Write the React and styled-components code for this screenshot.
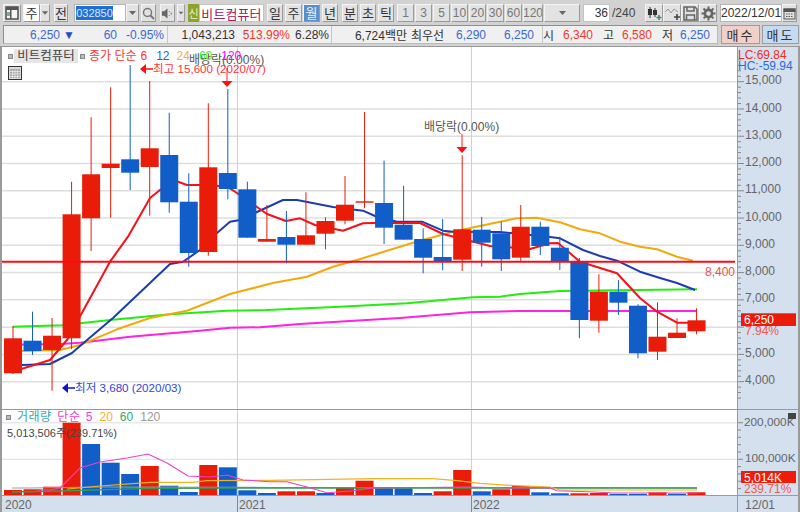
import React from "react";
import styled, { createGlobalStyle } from "styled-components";

const SANS = `"Liberation Sans", "Noto Sans CJK KR", sans-serif`;
const RED = "#e81c08";
const BLUE = "#115ec8";
const TEXT_BLUE = "#3a68d2";
const TEXT_RED = "#f0392b";
const AXIS_BG = "#d4e0ee";

const Global = createGlobalStyle`
  html, body { margin: 0; padding: 0; background: #fff; overflow: hidden; }
  * { box-sizing: border-box; }
`;

const Page = styled.div`
  width: 800px;
  height: 512px;
  display: flex;
  flex-direction: column;
  background: #d2d2d2;
  font-family: ${SANS};
  font-size: 12px;
  color: #333;
  overflow: hidden;
`;

const Toolbar = styled.div`
  height: 25px;
  padding: 4px 3px 3px;
  display: flex;
  align-items: stretch;
`;

const ToolButton = styled.div`
  flex: none;
  width: ${(p) => p.$w}px;
  margin-right: ${(p) => p.$mr ?? 1}px;
  display: flex;
  align-items: center;
  justify-content: center;
  background: ${(p) => (p.$active ? "#5b8fcb" : p.$white ? "#fff" : "#e2e2e2")};
  color: ${(p) => (p.$active ? "#e8f0fa" : p.$dim ? "#777" : "#333")};
  border: 1px solid;
  border-color: #f4f4f4 #9a9a9a #9a9a9a #f4f4f4;
  font-size: ${(p) => p.$fs ?? 13}px;
  line-height: 1;
  white-space: nowrap;
  overflow: hidden;
`;

const CodeField = styled.div`
  flex: none;
  width: 52px;
  background: #fff;
  border: 1px solid #b5b5b5;
  padding: 1px 0 1px 1px;
  display: flex;
  align-items: stretch;
`;

const CodeSelected = styled.span`
  background: #1f6fd8;
  color: #dfeaff;
  width: 37px;
  text-align: center;
  font-size: 11px;
  line-height: 14px;
`;

const NameField = styled.div`
  flex: none;
  width: 65px;
  margin-right: 3px;
  background: #fff;
  color: #a3205f;
  border: 1px solid #c4c4c4;
  display: flex;
  align-items: center;
  justify-content: center;
  font-size: 13px;
  letter-spacing: 0.1px;
  white-space: nowrap;
`;

const GreenBadge = styled.div`
  flex: none;
  width: 11px;
  background: #8ea32c;
  color: #e9efc3;
  font-size: 11px;
  display: flex;
  align-items: center;
  justify-content: center;
`;

const NumberField = styled.div`
  flex: none;
  width: 27px;
  background: #fff;
  border: 1px solid #c4c4c4;
  text-align: right;
  padding-right: 1px;
  font-size: 12px;
  line-height: 16px;
`;

const Slash = styled.span`
  flex: none;
  width: 35px;
  padding-left: 2px;
  line-height: 18px;
  font-size: 12px;
  color: #444;
`;

const DateField = styled.div`
  flex: none;
  width: 62px;
  background: #fff;
  border: 1px solid #b5b5b5;
  font-size: 12px;
  line-height: 16px;
  text-align: center;
  white-space: nowrap;
`;

const InfoRow = styled.div`
  height: 19px;
  padding: 0 2px 0 3px;
  display: flex;
  align-items: stretch;
`;

const InfoPanel = styled.div`
  flex: none;
  width: 715px;
  margin-right: 3px;
  display: flex;
  background: #f0f0f0;
  border: 1px solid #8e8e8e;
  border-right-color: #bbb;
  border-bottom-color: #bbb;
`;

const InfoSection = styled.div`
  flex: none;
  width: ${(p) => p.$w}px;
  display: flex;
  align-items: center;
  border-right: ${(p) => (p.$last ? "0" : "1px solid #c8c8c8")};
`;

const Cell = styled.span`
  flex: none;
  width: ${(p) => p.$w}px;
  text-align: right;
  color: ${(p) => p.$c ?? "#333"};
  font-size: 12px;
  white-space: nowrap;
`;

const TradeButton = styled.div`
  flex: none;
  width: ${(p) => p.$w}px;
  margin-right: ${(p) => p.$mr ?? 0}px;
  display: flex;
  align-items: center;
  justify-content: center;
  background: ${(p) => p.$bg};
  border: 1px solid #9d9d9d;
  font-size: 13px;
  letter-spacing: 2px;
  color: #333;
`;

const ChartFrame = styled.div`
  margin-top: 2px;
  flex: 1;
  display: grid;
  grid-template-columns: 735px 60px;
  grid-template-rows: 362px 85px 16px;
  gap: 1px;
  background: #9a9a9a;
  border-top: 1px solid #9a9a9a;
  padding: 0 2px;
`;

const Pane = styled.div`
  position: relative;
  background: ${(p) => (p.$axis ? AXIS_BG : "#fff")};
  overflow: hidden;
`;

const ChartSvg = styled.svg`
  display: block;
  width: 100%;
  height: 100%;
`;

const Legend = styled.div`
  position: absolute;
  top: ${(p) => p.$top}px;
  left: ${(p) => p.$left}px;
  display: flex;
  align-items: center;
  white-space: nowrap;
  font-size: 12px;
  line-height: 14px;
`;

const LegendBox = styled.span`
  background: #e6e6e6;
  color: #444;
  width: 64px;
  height: 14px;
  font-size: 12.5px;
  margin: 0 2px 0 1px;
  display: flex;
  align-items: center;
  justify-content: center;
`;

const LegendItem = styled.span`
  color: ${(p) => p.$c};
  margin-right: ${(p) => p.$mr ?? 7}px;
  letter-spacing: ${(p) => p.$ls ?? 0}px;
`;

const Bullet = styled.span`
  flex: none;
  width: 5px;
  height: 5px;
  margin-right: ${(p) => p.$mr ?? 0}px;
  background: #bbb;
  border: 1px solid #888;
`;

const GridIcon = styled.div`
  position: absolute;
  left: 6px;
  top: 19px;
  width: 14px;
  height: 14px;
`;

const VolumeInfo = styled.div`
  position: absolute;
  left: 5px;
  top: 14px;
  font-size: 11px;
  color: #444;
  white-space: nowrap;
`;

const ChartText = styled.text`
  font-family: ${SANS};
  font-size: ${(p) => p.$fs ?? 12}px;
  fill: ${(p) => p.$c ?? "#666"};
`;

/* ------- data ------- */
const X = (i) => 13 + 19.53 * i;
const Y = (p) => 81.7 + (15000 - p) * 0.02727;

// [up?, bodyTop, bodyBottom, wickTop, wickBottom]
const candles = [
  [1, 338.3, 373.3, 326, 374],
  [0, 340.7, 351, 311.7, 355],
  [1, 335.7, 350, 318, 390.7],
  [1, 214.3, 338.3, 181.7, 349],
  [1, 174.3, 218.3, 117.3, 251],
  [1, 163.7, 168, 87.3, 217.7],
  [0, 159.3, 172.7, 65, 190],
  [1, 148.3, 167, 81, 215.7],
  [0, 155, 202.3, 112.7, 212.7],
  [0, 201.7, 253, 173.3, 266.7],
  [1, 167.3, 252, 103.3, 255.7],
  [0, 173, 189, 89, 199.3],
  [0, 189.3, 237.7, 181.7, 237.7],
  [1, 239, 241.7, 205, 241.7],
  [0, 237, 244.7, 211, 263.3],
  [1, 235.3, 244.7, 192.3, 244.7],
  [1, 221, 233.7, 217.3, 249.3],
  [1, 204.7, 220.7, 176, 224.3],
  [1, 201.3, 202.7, 112, 208.3],
  [0, 203, 227.7, 160.7, 244],
  [0, 224.7, 239.7, 185.7, 239.7],
  [0, 239, 257.7, 228.3, 273.3],
  [0, 257, 261, 219, 270.3],
  [1, 229.3, 259.7, 155, 271],
  [0, 229.7, 242.7, 217, 266.7],
  [0, 233.3, 259.3, 221.7, 271],
  [1, 226.7, 257.7, 205, 261.7],
  [0, 226.7, 246, 221.7, 255],
  [0, 247.7, 261, 236.7, 270],
  [0, 261.7, 320, 258, 338.3],
  [1, 291.7, 320.7, 274.3, 332.7],
  [0, 291.7, 302.7, 280, 315],
  [0, 305.7, 353.3, 304.3, 358.3],
  [1, 336.7, 351.7, 302.3, 360],
  [1, 332.7, 338, 318.3, 338],
  [1, 320.3, 331.3, 308.3, 334.3],
];

const volumes = [
  [1, 490], [1, 489.3], [1, 486.7], [1, 422.7], [0, 444], [0, 462.7], [0, 474], [1, 466], [0, 485.7],
  [0, 492], [1, 465], [0, 467.3], [0, 490.3], [0, 493], [1, 491.3], [1, 491.3], [0, 493], [1, 488],
  [1, 480.7], [0, 488.3], [0, 488.3], [0, 493], [1, 491.3], [1, 470], [0, 491.3], [1, 489.3], [1, 486],
  [0, 492.3], [0, 493.3], [1, 493.3], [1, 493], [0, 493.7], [0, 493.7], [1, 492.3], [0, 493.7], [1, 492.3],
];

const maLines = [
  { color: "#ff22e0", w: 2, d: "13,344.7 60,344 80,342.7 130,336.7 200,330.7 230,327.7 260,327.3 300,324 400,318 470,312.3 520,311 697,311" },
  { color: "#22ee11", w: 2, d: "12.7,326.7 62,325.3 110,320 170,314.3 227,310.7 267,310 340,306.7 407,303.3 473,297.3 500,296.7 520,294 560,291 697,289.3" },
  { color: "#f3a90c", w: 2, d: "22,351 60,350 80,345 117,329.3 150,318 187,310.7 210,301.7 230,294 273,283 307,276.7 333,266.7 357,260 413,242.7 453,231.7 500,221.7 517,218.3 537,217.7 560,222.3 580,229.3 600,233.3 620,241.7 640,246.7 657,249.3 677,256.7 693,260.7" },
  { color: "#1c3db0", w: 2, d: "22,365 50,364 72,353 80,346 113,318 150,283 170,264 183,261.7 200,250 217,233 230,221.7 240,220 257,212 283,200 297,200 333,207 363,210.7 375,216 397,221.7 422,221.7 443,230.7 453,231.7 500,232 548,236.7 560,238.3 583,250 600,256 617,260.7 640,271.7 660,278 677,283 695,290" },
  { color: "#f5101a", w: 2, d: "13,370 22,368.7 50,360 67,340 100,280 110,261.7 128,236.7 150,198 160,190 178,181.7 187,185 208,185 227,186.7 237,193 257,207 267,214 286,221 300,218.3 315,225 343,230.7 363,223.3 383,222.7 420,223 443,234 490,246 530,249 550,243.3 558,243 580,261.7 617,273.3 640,298 657,311.7 677,322.7 697,322.7" },
];

const volLines = [
  { color: "#9b9b9b", w: 1.2, d: "12,488 30,488 100,487 270,487.5 540,487.5 697,488" },
  { color: "#2f9e4f", w: 1.3, d: "12,492 60,491 150,488.3 230,488 530,488 697,488" },
  { color: "#f3b21f", w: 1.2, d: "67,489 100,486 150,482.3 193,482.3 207,480.7 270,480.3 373,478.7 433,478.7 457,480.7 480,483.3 510,485.3 540,486.7 550,487 560,490 697,490" },
  { color: "#ee3fc8", w: 1.1, d: "37,490 50,490 60,488 80,468 100,462 127,458 148,454 167,463 188,476 210,477 227,475 243,480 270,481.7 287,481.7 307,487 327,492.7 353,490.7 373,488 470,487 513,488 550,488 557,490.7 588,491.7 610,492.7 697,493" },
];

const priceLabels = [15000, 14000, 13000, 12000, 11000, 10000, 9000, 8000, 7000, 5000, 4000];
const fmt = (n) => n.toLocaleString("en-US");
const range = (a, b, s) => Array.from({ length: Math.floor((b - a) / s) + 1 }, (_, i) => a + i * s);

/* ------- small drawings ------- */
const Caret = () => (
  <svg width="9" height="6" viewBox="0 0 9 6"><path d="M1 1h7L4.5 5z" fill="#666" /></svg>
);
const PanelIcon = () => (
  <svg width="14" height="14" viewBox="0 0 14 14">
    <rect x="1" y="1" width="12" height="12" fill="#f4f4f4" stroke="#444" strokeWidth="1.4" />
    <rect x="1" y="1" width="12" height="3" fill="#555" />
    <rect x="5" y="4" width="1.5" height="9" fill="#555" />
    <rect x="2" y="6" width="3" height="4" fill="#7aa" />
  </svg>
);
const SearchIcon = () => (
  <svg width="13" height="13" viewBox="0 0 13 13" fill="none" stroke="#777" strokeWidth="1.5">
    <circle cx="5.5" cy="5.5" r="4" /><path d="M8.5 8.5l3.5 3.5" strokeWidth="2" />
  </svg>
);
const SpeakerIcon = () => (
  <svg width="14" height="13" viewBox="0 0 14 13">
    <path d="M1 4h2.5L7 1v11L3.5 9H1z" fill="#666" />
    <path d="M9 4v1M9 8v1M11 5.5v2" stroke="#777" strokeWidth="1.2" />
  </svg>
);
const CandleAddIcon = () => (
  <svg width="15" height="15" viewBox="0 0 15 15">
    <path d="M3 1v11M8 2v9" stroke="#333" />
    <rect x="1" y="3" width="4" height="6" fill="#333" /><rect x="6" y="4" width="4" height="5" fill="#333" />
    <path d="M12 9v5M9.5 11.5h5" stroke="#3d8a70" strokeWidth="1.6" />
  </svg>
);
const LineAddIcon = () => (
  <svg width="15" height="15" viewBox="0 0 15 15" fill="none">
    <path d="M0 6l3-3 3 4 3-4 4 3" stroke="#999" />
    <path d="M12 8v6M9 11h6" stroke="#444" strokeWidth="1.6" />
  </svg>
);
const SaveIcon = () => (
  <svg width="15" height="15" viewBox="0 0 15 15" fill="none" stroke="#666" strokeWidth="1.5">
    <path d="M1 1h11l2 2v11H1z" /><path d="M4 1v4h7V1M3.5 14V9h8v5" />
  </svg>
);
const GearIcon = () => (
  <svg width="15" height="15" viewBox="0 0 15 15">
    <circle cx="7.5" cy="7.5" r="3.6" fill="none" stroke="#666" strokeWidth="2.6" />
    <path d="M7.5 .5v14M.5 7.5h14M2.5 2.5l10 10M12.5 2.5l-10 10" stroke="#666" strokeWidth="2" strokeDasharray="2.5 9" />
  </svg>
);
const CalendarIcon = () => (
  <svg width="13" height="13" viewBox="0 0 13 13" fill="none" stroke="#555">
    <rect x="1" y="2" width="11" height="10" /><rect x="1" y="2" width="11" height="2.5" fill="#555" />
    <path d="M3 7h7M3 9.5h7" strokeDasharray="1.5 1" />
  </svg>
);

const Candle = ({ i, data }) => {
  const [up, t, b, wt, wb] = data;
  const c = up ? RED : BLUE;
  const x = X(i);
  return (
    <g>
      <line x1={x} x2={x} y1={wt} y2={wb} stroke={c} strokeWidth="1" />
      <rect x={x - 9} y={t} width="18" height={b - t} fill={c} />
    </g>
  );
};

const Marker = ({ x, lineTop, triTop }) => (
  <g>
    <line x1={x} x2={x} y1={lineTop} y2={triTop} stroke="#f22" />
    <path d={`M${x - 5.5} ${triTop}h11l-5.5 6z`} fill="#f11" />
  </g>
);

const ArrowLeft = ({ x, y, len, color }) => (
  <g>
    <path d={`M${x} ${y}l6-5v10z`} fill={color} />
    <line x1={x + 5} x2={x + len} y1={y} y2={y} stroke={color} strokeWidth="1.5" />
  </g>
);

const PricePane = () => (
  <Pane>
    <ChartSvg viewBox="2 47 735 362">
      {range(4000, 15000, 1000).map((p) => (
        <line key={p} x1="2" x2="737" y1={Y(p)} y2={Y(p)} stroke="#dedede" strokeWidth="1.5" />
      ))}
      <line x1="237.5" x2="237.5" y1="47" y2="409" stroke="#d0d0d0" />
      <line x1="471.5" x2="471.5" y1="47" y2="409" stroke="#d0d0d0" />
      {maLines.map((l, i) => (
        <polyline key={i} points={l.d} fill="none" stroke={l.color} strokeWidth={l.w} strokeLinejoin="round" />
      ))}
      {candles.map((d, i) => <Candle key={i} i={i} data={d} />)}
      <line x1="2" x2="735" y1="261.7" y2="261.7" stroke="#ff0a14" strokeWidth="2" />
      <ChartText x="705" y="276" $c="#f0514a">8,400</ChartText>

      <ChartText x="189" y="64" $c="#555">배당락(0.00%)</ChartText>
      <Marker x={227} lineTop={68} triTop={81} />
      <ArrowLeft x={140} y={69} len={13} color="#f11" />
      <ChartText x="153" y="73" $c="#f33" $fs={11.6}>최고 15,600 (2020/07)</ChartText>

      <ChartText x="424" y="131" $c="#555">배당락(0.00%)</ChartText>
      <Marker x={462} lineTop={134} triTop={147} />

      <ArrowLeft x={62} y={388} len={13} color="#11c" />
      <ChartText x="75" y="392" $c="#3344dd" $fs={11.6}>최저 3,680 (2020/03)</ChartText>
    </ChartSvg>
    <Legend $top={2} $left={6}>
      <Bullet />
      <LegendBox>비트컴퓨터</LegendBox>
      <Bullet $mr={4} />
      <LegendItem $c="#f33" $mr={4}>종가 단순</LegendItem>
      <LegendItem $c="#f33" $mr={9}>6</LegendItem>
      <LegendItem $c="#2a5fd6">12</LegendItem>
      <LegendItem $c="#f5b22a" $mr={9}>24</LegendItem>
      <LegendItem $c="#33f02a" $mr={9}>60</LegendItem>
      <LegendItem $c="#f0f">120</LegendItem>
    </Legend>
    <GridIcon>
      <svg width="14" height="14" viewBox="0 0 14 14">
        <rect x=".5" y=".5" width="13" height="13" fill="#ddd" stroke="#333" />
        <path d="M2 3h10v9H2z" fill="#aaa" />
        <path d="M2 5.5h10M2 8h10M2 10.5h10M4.5 4v8M7 4v8M9.5 4v8" stroke="#eee" strokeWidth=".7" />
      </svg>
    </GridIcon>
  </Pane>
);

const PriceAxis = () => (
  <Pane $axis>
    <ChartSvg viewBox="738 47 60 362">
      {range(3400, 15800, 200).map((p) => (
        <line key={p} x1="738" x2={p % 1000 === 0 ? 744 : 741} y1={Y(p)} y2={Y(p)} stroke="#888" />
      ))}
      {priceLabels.map((p) => (
        <ChartText key={p} x="745" y={Y(p) + 2.6}>{fmt(p)}</ChartText>
      ))}
      <ChartText x="738" y="59" $c="#f02a1c">LC:69.84</ChartText>
      <ChartText x="738" y="70" $c="#2a6bd8">HC:-59.94</ChartText>
      <rect x="741" y="313.3" width="55" height="12.7" fill="#e81c08" />
      <ChartText x="744" y="324" $c="#fff">6,250</ChartText>
      <ChartText x="745" y="335" $c="#ef5a50">7.94%</ChartText>
    </ChartSvg>
  </Pane>
);

const VolumePane = () => (
  <Pane>
    <ChartSvg viewBox="2 410 735 85">
      <line x1="2" x2="737" y1="422.7" y2="422.7" stroke="#e8e8e8" strokeWidth="1.6" />
      <line x1="2" x2="737" y1="459.3" y2="459.3" stroke="#e4e4e4" strokeWidth="1.2" />
      <line x1="237.5" x2="237.5" y1="410" y2="495" stroke="#d0d0d0" />
      <line x1="471.5" x2="471.5" y1="410" y2="495" stroke="#d0d0d0" />
      {volumes.map(([up, t], i) => (
        <rect key={i} x={X(i) - 9} y={t} width="18" height={495 - t} fill={up ? RED : BLUE} />
      ))}
      {volLines.map((l, i) => (
        <polyline key={i} points={l.d} fill="none" stroke={l.color} strokeWidth={l.w} />
      ))}
    </ChartSvg>
    <Legend $top={0} $left={4}>
      <Bullet $mr={6} />
      <LegendItem $c="#3aa8a8" $mr={6} $ls={0.4}>거래량</LegendItem>
      <LegendItem $c="#ee44cc" $mr={5} $ls={0.7}>단순</LegendItem>
      <LegendItem $c="#ee44cc">5</LegendItem>
      <LegendItem $c="#f5b22a">20</LegendItem>
      <LegendItem $c="#35a868">60</LegendItem>
      <LegendItem $c="#999">120</LegendItem>
    </Legend>
    <VolumeInfo>5,013,506주(239.71%)</VolumeInfo>
  </Pane>
);

const VolumeAxis = () => (
  <Pane $axis>
    <ChartSvg viewBox="738 410 60 85">
      {range(422.7, 495, 7.32).map((y, i) => (
        <line key={i} x1="738" x2={i % 5 === 0 ? 743 : 741} y1={y} y2={y} stroke="#888" />
      ))}
      <ChartText x="744" y="426" $fs={11.8}>200,000K</ChartText>
      <ChartText x="745" y="462" $fs={11.8}>100,000K</ChartText>
      <rect x="788" y="413" width="8" height="6" fill="#444" />
      <rect x="741" y="471" width="55" height="12" fill="#ee1c08" />
      <ChartText x="744" y="481.5" $c="#fff">5,014K</ChartText>
      <ChartText x="744" y="493" $c="#ef5a50">239.71%</ChartText>
    </ChartSvg>
  </Pane>
);

const TimeAxis = () => (
  <Pane $axis>
    <ChartSvg viewBox="2 496 735 16">
      <ChartText x="5" y="509">2020</ChartText>
      <ChartText x="239" y="509">2021</ChartText>
      <ChartText x="473" y="509">2022</ChartText>
      <line x1="237.5" x2="237.5" y1="496" y2="512" stroke="#888" />
      <line x1="471.5" x2="471.5" y1="496" y2="512" stroke="#888" />
    </ChartSvg>
  </Pane>
);

const DateAxis = () => (
  <Pane $axis>
    <ChartSvg viewBox="738 496 60 16">
      <ChartText x="745" y="509">12/01</ChartText>
    </ChartSvg>
  </Pane>
);

const minutes = ["1", "3", "5", "10", "20", "30", "60", "120"];

export default function App() {
  return (
    <Page>
      <Global />
      <Toolbar>
        <ToolButton $w={18} $mr={2}><PanelIcon /></ToolButton>
        <ToolButton $w={17} $white $mr={0}>주</ToolButton>
        <ToolButton $w={10} $mr={4}><Caret /></ToolButton>
        <ToolButton $w={14} $mr={6}>전</ToolButton>
        <CodeField><CodeSelected>032850</CodeSelected></CodeField>
        <ToolButton $w={13} $mr={2}><Caret /></ToolButton>
        <ToolButton $w={15} $mr={4}><SearchIcon /></ToolButton>
        <ToolButton $w={15} $mr={2}><SpeakerIcon /></ToolButton>
        <ToolButton $w={8} $mr={3}><Caret /></ToolButton>
        <GreenBadge>신</GreenBadge>
        <NameField>비트컴퓨터</NameField>
        <ToolButton $w={16} $mr={2}>일</ToolButton>
        <ToolButton $w={17} $mr={1}>주</ToolButton>
        <ToolButton $w={17} $mr={2} $active>월</ToolButton>
        <ToolButton $w={16} $mr={4}>년</ToolButton>
        <ToolButton $w={16} $mr={2}>분</ToolButton>
        <ToolButton $w={16} $mr={2}>초</ToolButton>
        <ToolButton $w={16} $mr={3}>틱</ToolButton>
        {minutes.map((m, i) => (
          <ToolButton key={m} $w={i === 7 ? 20 : 17} $mr={1} $dim $fs={12}>{m}</ToolButton>
        ))}
        <ToolButton $w={36} $mr={3}><Caret /></ToolButton>
        <NumberField>36</NumberField>
        <Slash>/240</Slash>
        <ToolButton $w={18} $mr={0}><CandleAddIcon /></ToolButton>
        <ToolButton $w={18} $mr={0}><LineAddIcon /></ToolButton>
        <ToolButton $w={18} $mr={0}><SaveIcon /></ToolButton>
        <ToolButton $w={18} $mr={3}><GearIcon /></ToolButton>
        <DateField>2022/12/01</DateField>
        <ToolButton $w={15} $mr={0}><CalendarIcon /></ToolButton>
      </Toolbar>
      <InfoRow>
        <InfoPanel>
          <InfoSection $w={164}>
            <Cell $w={56} $c={TEXT_BLUE}>6,250</Cell>
            <Cell $w={15} $c="#1f4fc8">▼</Cell>
            <Cell $w={42} $c={TEXT_BLUE}>60</Cell>
            <Cell $w={47} $c={TEXT_BLUE}>-0.95%</Cell>
          </InfoSection>
          <InfoSection $w={164}>
            <Cell $w={67}>1,043,213</Cell>
            <Cell $w={55} $c={TEXT_RED}>513.99%</Cell>
            <Cell $w={39}>6.28%</Cell>
          </InfoSection>
          <InfoSection $w={211}>
            <Cell $w={75}>6,724백만</Cell>
            <Cell $w={37}>최우선</Cell>
            <Cell $w={42} $c={TEXT_BLUE}>6,290</Cell>
            <Cell $w={48} $c={TEXT_BLUE}>6,250</Cell>
          </InfoSection>
          <InfoSection $w={174} $last>
            <Cell $w={11}>시</Cell>
            <Cell $w={39} $c={TEXT_RED}>6,340</Cell>
            <Cell $w={21}>고</Cell>
            <Cell $w={38} $c={TEXT_RED}>6,580</Cell>
            <Cell $w={21}>저</Cell>
            <Cell $w={37} $c={TEXT_BLUE}>6,250</Cell>
          </InfoSection>
        </InfoPanel>
        <TradeButton $w={39} $mr={2} $bg="#f3cfc9">매수</TradeButton>
        <TradeButton $w={37} $bg="#c4dcf3">매도</TradeButton>
      </InfoRow>
      <ChartFrame>
        <PricePane />
        <PriceAxis />
        <VolumePane />
        <VolumeAxis />
        <TimeAxis />
        <DateAxis />
      </ChartFrame>
    </Page>
  );
}
